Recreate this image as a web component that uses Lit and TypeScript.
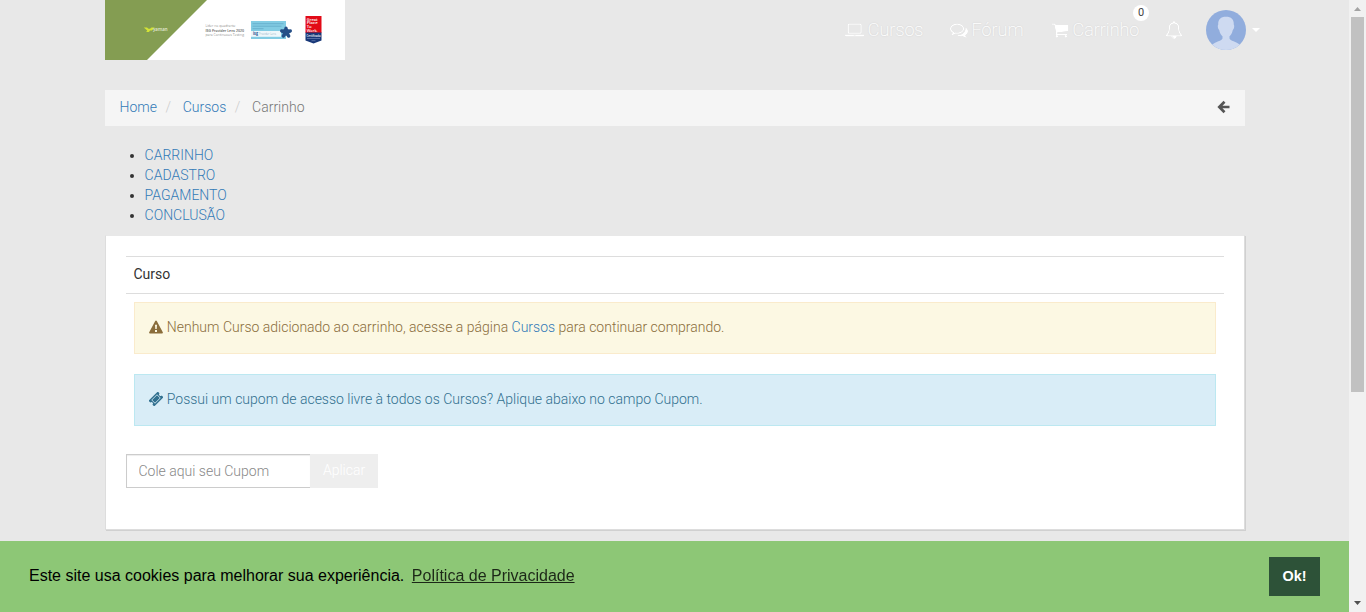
import { LitElement, html, css } from "lit";
import { customElement } from "lit/decorators.js";

const laptop = "M416 1280q-66 0-113-47t-47-113v-704q0-66 47-113t113-47h1088q66 0 113 47t47 113v704q0 66-47 113t-113 47h-1088zm-32-864v704q0 13 9.500 22.500t22.500 9.500h1088q13 0 22.500-9.500t9.500-22.500v-704q0-13-9.500-22.500t-22.500-9.500h-1088q-13 0-22.500 9.500t-9.500 22.500zm1376 928h160v96q0 40-47 68t-113 28h-1600q-66 0-113-28t-47-68v-96h1760zm-720 96q16 0 16-16t-16-16h-160q-16 0-16 16t16 16h160z";
const cart = "M704 1536q0 52-38 90t-90 38-90-38-38-90 38-90 90-38 90 38 38 90zm896 0q0 52-38 90t-90 38-90-38-38-90 38-90 90-38 90 38 38 90zm128-1088v512q0 24-16.500 42.500t-40.500 21.500l-1044 122q13 60 13 70 0 16-24 64h920q26 0 45 19t19 45-19 45-45 19h-1024q-26 0-45-19t-19-45q0-11 8-31.500t16-36 21.500-40 15.500-29.500l-177-823h-204q-26 0-45-19t-19-45 19-45 45-19h256q16 0 28.500 6.500t19.500 15.500 13 24.500 8 26 5.500 29.500 4.500 26h1201q26 0 45 19t19 45z";
const comments = "M704 384q-153 0-286 52t-211.500 141-78.500 191q0 82 53 158t149 132l97 56-35 84q34-20 62-39l44-31 53 10q78 14 153 14 153 0 286-52t211.500-141 78.500-191-78.500-191-211.500-141-286-52zm0-128q191 0 353.500 68.500t256.500 186.500 94 257-94 257-256.500 186.500-353.500 68.500q-86 0-176-16-124 88-278 128-36 9-86 16h-3q-11 0-20.500-8t-11.500-21q-1-3-1-6.500t.5-6.500 2-6l2.500-5 3.500-5.500 4-5 4.500-5 4-4.500q5-6 23-25t26-29.500 22.500-29 25-38.500 20.500-44q-124-72-195-177t-71-224q0-139 94-257t256.500-186.500 353.500-68.500zm822 1169q10 24 20.500 44t25 38.500 22.500 29 26 29.500 23 25q1 1 4 4.500t4.500 5 4 5 3.500 5.500l2.500 5 2 6 .5 6.500-1 6.500q-3 14-13 22t-22 7q-50-7-86-16-154-40-278-128-90 16-176 16-271 0-472-132 58 4 88 4 161 0 309-45t264-129q125-92 192-212t67-254q0-77-23-152 129 71 204 178t75 230q0 120-71 224.500t-195 176.500z";
const bell = "M912 1696q0-16-16-16-59 0-101.500-42.500t-42.500-101.500q0-16-16-16t-16 16q0 73 51.500 124.500t124.500 51.500q16 0 16-16zm-666-288h1300q-266-300-266-832 0-51-24-105t-69-103-121.500-80.500-169.500-31.500-169.500 31.500-121.500 80.500-69 103-24 105q0 532-266 832zm1482 0q0 52-38 90t-90 38h-448q0 106-75 181t-181 75-181-75-75-181h-448q-52 0-90-38t-38-90q50-42 91-88t85-119.500 74.500-158.500 50-206 19.500-260q0-152 117-282.500t307-158.500q-8-19-8-39 0-40 28-68t68-28 68 28 28 68q0 20-8 39 190 28 307 158.500t117 282.500q0 139 19.500 260t50 206 74.500 158.500 85 119.500 91 88z";

@customElement("site-logo")
class SiteLogo extends LitElement {
  static styles = css`
    :host { display: block; width: 240px; height: 60px; }
    svg { display: block; }
  `;
  render() {
    return html`<svg width="240" height="60" viewBox="0 0 240 60" font-family="'Open Sans', sans-serif">
      <rect width="240" height="60" fill="#fff" />
      <path d="M0 0H102L42 60H0Z" fill="#849d52" />
      <path d="M38.800 27.500h3.200l1.500 1.300h1.500L46.500 27.500h3.200L47 30.500H45l-1 1.500h-2.800l1-1.500Z" fill="#d3e336" />
      <text x="48" y="31" font-size="6" font-weight="600" fill="#e4ead8" textLength="14.500" lengthAdjust="spacingAndGlyphs">yaman</text>
      <g font-size="4" fill="#666">
        <text x="100.500" y="27.200" textLength="30" lengthAdjust="spacingAndGlyphs">Líder no quadrante</text>
        <text x="100.500" y="31.500" font-weight="600" fill="#555" textLength="38.500" lengthAdjust="spacingAndGlyphs">ISG Provider Lens 2020</text>
        <text x="100.500" y="35.800" textLength="38.500" lengthAdjust="spacingAndGlyphs">para Continuous Testing</text>
      </g>
      <rect x="146" y="21" width="35" height="18" fill="#82cce3" />
      <path d="M147.500 23.700h31M147.500 26.200h29M147.500 28.700h11" stroke="#62a9c8" stroke-width=".8" />
      <rect x="146" y="31" width="30" height="5.800" fill="#eef7fa" />
      <text x="148" y="35.300" font-size="5" font-weight="700" fill="#255a92" textLength="5" lengthAdjust="spacingAndGlyphs">isg</text>
      <text x="154" y="35" font-size="3.300" fill="#789db5" textLength="17" lengthAdjust="spacingAndGlyphs">Provider Lens</text>
      <g fill="none" stroke="#254f87" stroke-width="3.400" stroke-linecap="round">
        <path d="M181 32V28.300M181 32l-4.300-1M181 32l4.300-1M181 32l-2.700 4M181 32l2.700 4" />
      </g>
      <circle cx="181" cy="32" r="3.500" fill="#254f87" />
      <path d="M200.500 16h16v17h-16z" fill="#e20a17" />
      <path d="M200.500 32.500h16V40.500l-8 3-8-3Z" fill="#173778" />
      <g font-size="4.300" font-weight="600" fill="#fff">
        <text x="201.700" y="20.500" textLength="11" lengthAdjust="spacingAndGlyphs">Great</text>
        <text x="201.700" y="24.200" textLength="11" lengthAdjust="spacingAndGlyphs">Place</text>
        <text x="201.700" y="27.800">To</text>
        <text x="201.700" y="31.500" textLength="11" lengthAdjust="spacingAndGlyphs">Work.</text>
        <text x="201.500" y="36.600" font-size="3" textLength="14" lengthAdjust="spacingAndGlyphs">Certificada</text>
      </g>
      <path d="M202 38.500h13M206.500 40.700h4" stroke="#7f93c0" stroke-width=".6" />
    </svg>`;
  }
}

@customElement("site-nav")
class SiteNav extends LitElement {
  static styles = css`
    :host { display: flex; height: 60px; align-items: center; color: #fff; font: 200 18px/20px Roboto, sans-serif; }
    .item { display: flex; align-items: center; text-shadow: 0 0 2px rgba(0,0,0,.13); white-space: pre; }
    svg { display: block; fill: #fff; flex: none; filter: drop-shadow(0 0 .7px rgba(0,0,0,.14)); }
    .label { display: block; margin-left: 3.500px; }
    .courses { width: 105px; }
    .forum { width: 101px; }
    .cart { position: relative; width: 114px; }
    .badge { position: absolute; left: 82px; top: -15px; width: 16px; height: 16px; border-radius: 50%; background: #fff; color: #444; font: 400 11px/16px Roboto, sans-serif; text-align: center; text-shadow: none; }
    .avatar { margin-left: 23px; filter: none; }
    .caret { margin-left: 6px; border: 4px solid transparent; border-top-color: #fff; border-bottom: 0; }
  `;
  render() {
    return html`
      <div class="item courses"><svg width="19.300" height="18" viewBox="0 0 1920 1792"><path d=${laptop} /></svg><span class="label">Cursos</span></div>
      <div class="item forum"><svg width="18" height="18" viewBox="0 0 1792 1792"><path d=${comments} /></svg><span class="label">Fórum</span></div>
      <div class="item cart"><svg width="18" height="18" viewBox="0 0 1792 1792"><path d=${cart} /></svg><span class="label">Carrinho</span><span class="badge">0</span></div>
      <svg width="18" height="18" viewBox="0 0 1792 1792"><path d=${bell} /></svg>
      <svg class="avatar" width="40" height="40" viewBox="0 0 40 40">
        <clipPath id="round"><circle cx="20" cy="20" r="20" /></clipPath>
        <g clip-path="url(#round)"><rect width="40" height="40" fill="#91addd" />
          <path d="M20 6.800c-5.600 0-8 2.800-7.800 8-.9.800-.2 4.400 1 5.100.7 3.500 1.900 5 3.300 6.400v2.200c-.5 2.300-6.900 3.300-10.500 6.200V42h28v-7.300c-3.600-2.900-10-3.900-10.500-6.200v-2.200c1.400-1.400 2.600-2.900 3.300-6.400 1.200-.7 1.900-4.300 1-5.100.2-5.200-2.200-8-7.800-8Z" fill="#cedaf1" /></g>
      </svg>
      <span class="caret"></span>`;
  }
}

@customElement("window-scrollbar")
class WindowScrollbar extends LitElement {
  static styles = css`
    :host { display: flex; flex-direction: column; align-items: center; width: 17px; height: 612px; background: #f1f1f1; }
    svg { display: block; flex: none; }
    .thumb { width: 13px; height: 375px; background: #c1c1c1; }
    .space { flex: 1; }
  `;
  render() {
    return html`<svg width="17" height="17"><path d="M5 11h7L8.500 7Z" fill="#a3a3a3" /></svg>
      <div class="thumb"></div><div class="space"></div>
      <svg width="17" height="17"><path d="M5 6h7l-3.500 4Z" fill="#505050" /></svg>`;
  }
}

@customElement("app-root")
class AppRoot extends LitElement {
  static styles = css`
    :host { display: flex; width: 1366px; height: 612px; overflow: hidden; background: #e8e8e8; color: #333; font: 300 14px/20px Roboto, sans-serif; }
    * { box-sizing: border-box; }
    a { color: #337ab7; text-decoration: none; }
    .page { width: 1349px; height: 612px; display: flex; flex-direction: column; }
    .top { display: flex; height: 60px; padding-left: 105px; }
    .top site-nav { margin-left: 500px; }
    .content { width: 1140px; margin: 30px 0 0 105px; flex: 1; }
    .crumbs { display: flex; align-items: center; height: 36px; padding: 0 15px 2px 14.500px; background: #f5f5f5; color: #777; }
    .sep { color: #ccc; width: 25.800px; padding-left: 8.500px; }
    .crumbs svg { margin-left: auto; }
    ul { margin: 19px 0 10px; padding-left: 39.600px; }
    .panel { height: 295px; background: #fff; border: 1px solid #ddd; border-top-color: #e8e8e8; box-shadow: 1px 1px 0 #d0d0d0; padding: 20px 20px 0; width: 1140px; }
    .heading { height: 38px; border-top: 1px solid #ddd; border-bottom: 1px solid #ddd; padding: 7px 7.500px; font-weight: 400; }
    .alert { display: flex; align-items: center; height: 52px; margin: 8px 8px 0; padding: 0 15px 2px; border: 1px solid #faebcc; background: #fcf8e3; color: #8a6d3b; }
    .alert svg { flex: none; margin: 0 3.400px 0 -.6px; }
    .info { margin-top: 20px; color: #31708f; background: #d9edf7; border-color: #bce8f1; }
    .coupon { display: flex; height: 34px; margin-top: 28px; }
    .coupon input { width: 184px; height: 34px; padding: 0 11.500px; border: 1px solid #ccc; border-right: 0; border-radius: 0; box-shadow: inset 0 1px 1px rgba(0,0,0,.075); font: 300 14px/20px Roboto, sans-serif; background: #fff; outline: 0; }
    .coupon input::placeholder { color: #888; opacity: 1; }
    .coupon button { width: 68px; padding: 0 0 2px; border: 0; background: #eee; color: #fff; font: 300 14px/20px Roboto, sans-serif; }
    .cookies { display: flex; height: 71px; align-items: center; padding: 0 29px; background: #8dc776; color: #000; font: 16px/24px "Liberation Sans", Arial, sans-serif; }
    .cookies span, .policy { padding-bottom: 2px; }
    .policy { margin-left: 7.500px; color: #000; opacity: .8; text-decoration: underline; }
    .ok { margin-left: auto; width: 51px; height: 39px; background: #2d5238; color: #fff; border: 0; font: 700 14.400px/20px "Liberation Sans", Arial, sans-serif; padding: 0 0 2px; }
  `;
  render() {
    return html`
      <div class="page">
        <header class="top"><site-logo></site-logo><site-nav></site-nav></header>
        <main class="content">
          <nav class="crumbs">
            <a href="#">Home</a><span class="sep">/</span><a href="#">Cursos</a><span class="sep">/</span><span>Carrinho</span>
            <svg width="13" height="14" viewBox="0 0 13 14"><path d="M7.500 1.800L2.300 7l5.200 5.200M2.500 7H12.500" fill="none" stroke="#555" stroke-width="2.700" /></svg>
          </nav>
          <ul>
            ${["CARRINHO", "CADASTRO", "PAGAMENTO", "CONCLUSÃO"].map((step) => html`<li><a href="#">${step}</a></li>`)}
          </ul>
          <section class="panel">
            <div class="heading">Curso</div>
            <div class="alert">
              <svg width="14" height="14" viewBox="0 0 14 14"><path d="M7 .5q.5 0 .8.600L13.800 12.200q.4 1.300-.8 1.300H1Q-.2 13.500.2 12.200L6.200 1.100Q6.500.500 7 .500Z" fill="#8a6d3b" /><path d="M6 4.800h2l-.3 4.200H6.300ZM6 10h2v2H6Z" fill="#fcf8e3" /></svg>
              <span>Nenhum Curso adicionado ao carrinho, acesse a página <a href="#">Cursos</a> para continuar comprando.</span>
            </div>
            <div class="alert info">
              <svg width="14" height="14" viewBox="0 0 14 14"><g transform="rotate(-45 7 7)"><path d="M.5 3h13v2.500a1.500 1.500 0 0 0 0 3V11H.5V8.500a1.500 1.500 0 0 0 0-3Z" fill="#31708f" /><path d="M3.300 4.700h7.400v4.600H3.300Z" fill="none" stroke="#d9edf7" stroke-width=".8" /></g></svg>
              <span>Possui um cupom de acesso livre à todos os Cursos? Aplique abaixo no campo Cupom.</span>
            </div>
            <div class="coupon"><input placeholder="Cole aqui seu Cupom" /><button>Aplicar</button></div>
          </section>
        </main>
        <footer class="cookies">
          <span>Este site usa cookies para melhorar sua experiência.</span><a class="policy" href="#">Política de Privacidade</a>
          <button class="ok">Ok!</button>
        </footer>
      </div>
      <window-scrollbar></window-scrollbar>`;
  }
}
